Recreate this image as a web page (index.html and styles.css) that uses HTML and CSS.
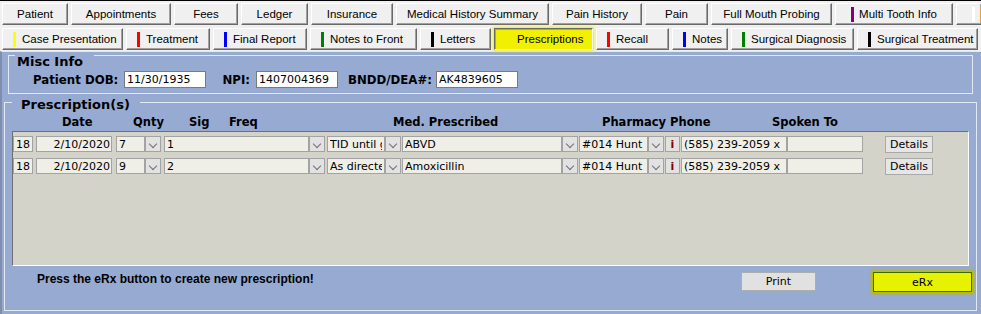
FILE: index.html
```html
<!DOCTYPE html>
<html lang="en">
<head>
    <meta charset="UTF-8">
    <meta name="viewport" content="width=device-width, initial-scale=1.0">
    <title>Prescriptions</title>
    <link rel="stylesheet" href="styles.css">
</head>
<body>
    <div class="toolbar">
        <div class="tabs tabs-main">
            <button class="tab">Patient</button>
            <button class="tab">Appointments</button>
            <button class="tab">Fees</button>
            <button class="tab">Ledger</button>
            <button class="tab">Insurance</button>
            <button class="tab">Medical History Summary</button>
            <button class="tab">Pain History</button>
            <button class="tab">Pain</button>
            <button class="tab">Full Mouth Probing</button>
            <button class="tab"><span class="mark purple"></span>Multi Tooth Info</button>
            <button class="tab tab-cut"><span class="mark white"></span><span class="mark orange"></span></button>
        </div>
        <div class="tabs tabs-sub">
            <button class="tab"><span class="mark yellow"></span>Case Presentation</button>
            <button class="tab"><span class="mark red"></span>Treatment</button>
            <button class="tab"><span class="mark blue"></span>Final Report</button>
            <button class="tab"><span class="mark green"></span>Notes to Front</button>
            <button class="tab"><span class="mark black"></span>Letters</button>
            <button class="tab tab-on">Prescriptions</button>
            <button class="tab"><span class="mark red"></span>Recall</button>
            <button class="tab"><span class="mark blue"></span>Notes</button>
            <button class="tab"><span class="mark green"></span>Surgical Diagnosis</button>
            <button class="tab"><span class="mark black"></span>Surgical Treatment</button>
        </div>
    </div>

    <div class="screen">
        <div class="group group-misc">
            <div class="group-title">Misc Info</div>
            <div class="misc-row">
                <label class="lbl lbl-dob">Patient DOB:</label>
                <input class="box" value="11/30/1935">
                <label class="lbl lbl-npi">NPI:</label>
                <input class="box" value="1407004369">
                <label class="lbl lbl-dea">BNDD/DEA#:</label>
                <input class="box box-dea" value="AK4839605">
            </div>
        </div>

        <div class="group group-rx">
            <div class="group-title">Prescription(s)</div>
            <div class="rx-head">
                <span>Date</span>
                <span>Qnty</span>
                <span>Sig</span>
                <span>Freq</span>
                <span>Med. Prescribed</span>
                <span>Pharmacy Phone</span>
                <span>Spoken To</span>
            </div>
            <div class="rx-panel">
                <div class="rx-row">
                    <input class="fld c-num" value="18">
                    <input class="fld c-date" value="2/10/2020">
                    <div class="combo c-qty"><input class="fld" value="7"><span class="drop"></span></div>
                    <div class="combo c-sig"><input class="fld" value="1"><span class="drop"></span></div>
                    <div class="combo c-freq"><input class="fld" value="TID until gone"><span class="drop"></span></div>
                    <div class="combo c-med"><input class="fld" value="ABVD"><span class="drop"></span></div>
                    <div class="combo c-pharm"><input class="fld" value="#014 Hunt"><span class="drop"></span></div>
                    <button class="info">i</button>
                    <input class="fld c-phone" value="(585) 239-2059 x">
                    <input class="fld c-spoken" value="">
                    <button class="btn c-details">Details</button>
                </div>
                <div class="rx-row">
                    <input class="fld c-num" value="18">
                    <input class="fld c-date" value="2/10/2020">
                    <div class="combo c-qty"><input class="fld" value="9"><span class="drop"></span></div>
                    <div class="combo c-sig"><input class="fld" value="2"><span class="drop"></span></div>
                    <div class="combo c-freq"><input class="fld" value="As directed"><span class="drop"></span></div>
                    <div class="combo c-med"><input class="fld" value="Amoxicillin"><span class="drop"></span></div>
                    <div class="combo c-pharm"><input class="fld" value="#014 Hunt"><span class="drop"></span></div>
                    <button class="info">i</button>
                    <input class="fld c-phone" value="(585) 239-2059 x">
                    <input class="fld c-spoken" value="">
                    <button class="btn c-details">Details</button>
                </div>
            </div>
            <div class="rx-foot">
                <span class="note">Press the eRx button to create new prescription!</span>
                <button class="btn btn-print">Print</button>
                <button class="btn btn-erx">eRx</button>
            </div>
        </div>
    </div>
</body>
</html>
```

FILE: styles.css
```css
* {
    box-sizing: border-box;
}
body {
    margin: 0;
    width: 981px;
    height: 314px;
    overflow: hidden;
    background-color: #f0f0f0;
    font-family: "DejaVu Sans", Verdana, sans-serif;
    font-size: 11px;
    color: #000;
}

/* tab bar */
.toolbar {
    border-top: 1px solid #000;
    padding: 2px 0 1px 2px;
    background-color: #f0f0f0;
}
.tabs {
    display: grid;
    height: 22px;
}
.tabs-main {
    grid-template-columns: 69px 103px 67px 70px 85px 156px 93px 66px 124px 121px 1fr;
}
.tabs-sub {
    grid-template-columns: 124px 87px 97px 110px 74px 102px 76px 59px 126px 1fr;
    margin-top: 3px;
}
.tab {
    display: flex;
    align-items: center;
    justify-content: center;
    height: 22px;
    margin: 0 3px 0 0;
    padding: 0;
    font: 11.5px "Liberation Sans", Arial, sans-serif;
    color: #000;
    white-space: nowrap;
    overflow: hidden;
    background-color: #f0f0f0;
    border: 1px solid;
    border-color: #fff #696969 #696969 #fff;
    box-shadow: inset -1px -1px #a0a0a0;
}
.tabs-sub .tab {
    justify-content: flex-start;
    padding-left: 10px;
}
.tabs-main .tab-cut {
    justify-content: flex-start;
    margin-right: 0;
    padding-left: 15px;
    border-right: none;
}
.tabs-sub .tab-on {
    padding-left: 22px;
    background-color: #f0f000;
    border-color: #696969 #fff #fff #696969;
    box-shadow: inset 1px 1px #a0a0a0, 0 0 3px 1px #ecec20;
}
.mark {
    flex: none;
    width: 3px;
    height: 15px;
    margin-right: 5px;
}
.tabs-sub .mark {
    margin-right: 6px;
}
.yellow { background-color: #ffff00; }
.red { background-color: #ff0000; }
.blue { background-color: #0000ff; }
.green { background-color: #008000; }
.black { background-color: #000; }
.purple { background-color: #800080; }
.white { background-color: #fff; }
.orange { background-color: #f0a030; }

/* blue screen */
.screen {
    height: 263px;
    background-color: #96aad2;
    border-top: 1px solid #e3e8f2;
    border-left: 2px solid #7f8dae;
    display: flow-root;
}
.group {
    border: 1px solid #e3e8f2;
}
.group-title {
    width: fit-content;
    font: bold 13px/13px "DejaVu Sans", Verdana, sans-serif;
    background-color: #96aad2;
}
.group-misc {
    margin: 3px 8px 0 6px;
}
.group-misc .group-title {
    margin: -1px 0 0 6px;
    padding: 0 11px 0 2px;
}
.group-rx {
    margin: 8px 4px 0 2px;
    padding-bottom: 18px;
}
.group-rx .group-title {
    margin: -5px 0 0 7px;
    padding: 0 10px 0 9px;
}

/* misc info */
.misc-row {
    display: flex;
    align-items: center;
    height: 17px;
    margin: 3px 0 5px;
    padding-left: 24px;
}
.lbl {
    flex: none;
    font: bold 11.75px "DejaVu Sans", Verdana, sans-serif;
    text-align: right;
    white-space: nowrap;
}
.lbl-dob { width: 85px; }
.lbl-npi { width: 28px; margin-left: 16px; }
.lbl-dea { width: 87px; margin-left: 7px; }
.box {
    width: 82px;
    height: 17px;
    margin: 0 0 0 6px;
    padding: 0 2px;
    font: 11px "DejaVu Sans", Verdana, sans-serif;
    background-color: #fff;
    border: 1px solid #7a7a7a;
    outline: none;
}
.box-dea {
    margin-left: 4px;
}

/* prescriptions */
.rx-head {
    display: grid;
    grid-template-columns: 71px 56px 40px 164px 209px 170px auto;
    margin-top: 4px;
    padding-left: 57px;
    font: bold 11.5px/14px "DejaVu Sans", Verdana, sans-serif;
    white-space: nowrap;
}
.rx-panel {
    height: 135px;
    margin: 2px 7px 0;
    padding-top: 4px;
    background-color: #d4d3ca;
    border: 1px solid;
    border-color: #6f6f6f #fff #fff #6f6f6f;
}
.rx-row {
    display: flex;
    align-items: flex-start;
    height: 17px;
    margin-bottom: 5px;
}
.fld {
    height: 16px;
    margin: 0;
    padding: 0 2px;
    font: 11px "DejaVu Sans", Verdana, sans-serif;
    color: #000;
    background-color: #efefe7;
    border: 1px solid #a3a3a3;
    outline: none;
}
.combo {
    display: flex;
}
.combo .fld {
    flex: 1;
    width: 0;
    min-width: 0;
}
.drop {
    flex: none;
    display: flex;
    justify-content: center;
    width: 16px;
    height: 16px;
    background-color: #e2e2e2;
    border: 1px solid #a3a3a3;
}
.drop::after {
    content: "";
    width: 5px;
    height: 5px;
    margin-top: 4px;
    border-right: 1px solid #707070;
    border-bottom: 1px solid #707070;
    transform: rotate(45deg);
}
.c-num { width: 20px; }
.c-date { width: 76px; margin-left: 3px; padding-right: 1px; text-align: right; }
.c-qty { width: 45px; margin-left: 4px; }
.c-sig { width: 161px; margin-left: 3px; }
.c-freq { width: 74px; margin-left: 2px; }
.c-med { width: 176px; margin-left: 1px; }
.c-pharm { width: 85px; margin-left: 1px; }
.info {
    width: 15px;
    height: 16px;
    margin: 0 0 0 1px;
    padding: 0;
    font: bold 11px "DejaVu Sans", Verdana, sans-serif;
    color: #800000;
    background-color: #e2e2e2;
    border: 1px solid #a3a3a3;
}
.c-phone { width: 106px; margin-left: 1px; }
.c-spoken { width: 76px; }
.btn {
    margin: 0;
    padding: 0;
    font: 11px "DejaVu Sans", Verdana, sans-serif;
    color: #000;
    background-color: #e1e1e1;
    border: 1px solid #adadad;
}
.c-details {
    width: 48px;
    height: 17px;
    margin-left: 22px;
    background-color: #e6e6e6;
    border-color: #a9a9a9;
}

/* footer */
.rx-foot {
    display: flex;
    align-items: flex-start;
    height: 20px;
    margin-top: 6px;
}
.note {
    margin: 1px 0 0 32px;
    font: bold 12px/12px "Liberation Sans", Arial, sans-serif;
    white-space: nowrap;
}
.btn-print {
    width: 75px;
    height: 19px;
    margin-left: auto;
    margin-right: 57px;
}
.btn-erx {
    width: 99px;
    height: 20px;
    margin-right: 4px;
    background-color: #e6f200;
    border: 1px solid #3d6b00;
    box-shadow: 0 0 2px 2px #bcbc00;
}
```
